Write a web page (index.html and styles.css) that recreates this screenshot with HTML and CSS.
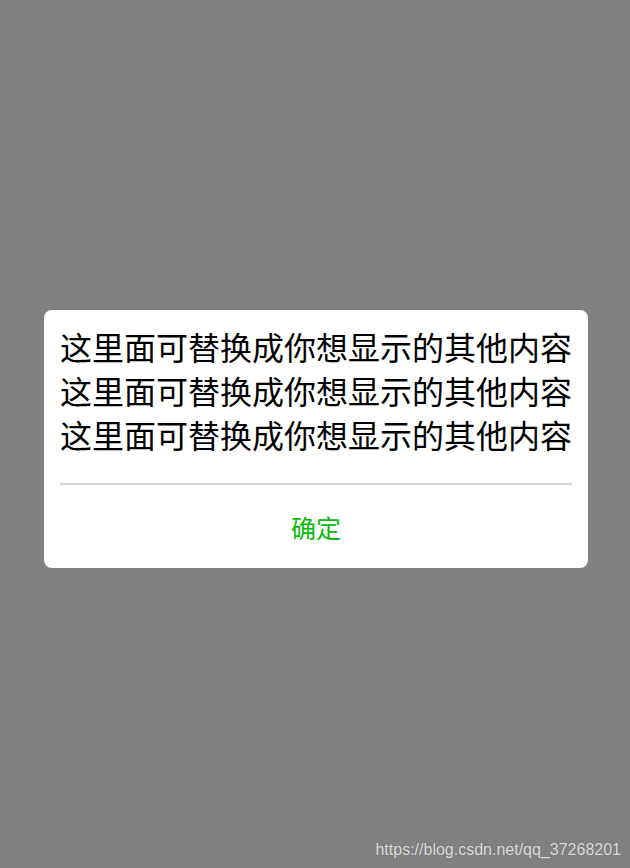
FILE: index.html
```html
<!DOCTYPE html>
<html lang="zh-CN">
<head>
<meta charset="utf-8">
<title>Dialog</title>
<link rel="stylesheet" href="styles.css">
</head>
<body>
<div class="screen">
  <div class="dialog">
    <div class="content">
      <div class="line">这里面可替换成你想显示的其他内容</div>
      <div class="line">这里面可替换成你想显示的其他内容</div>
      <div class="line">这里面可替换成你想显示的其他内容</div>
    </div>
    <div class="divider"></div>
    <div class="actions">
      <span class="confirm">确定</span>
    </div>
  </div>
  <div class="watermark">https://blog.csdn.net/qq_37268201</div>
</div>
</body>
</html>
```
FILE: styles.css
```css
html, body {
  margin: 0;
  padding: 0;
}
body {
  background: #808080;
  font-family: "Noto Sans CJK SC", "Noto Sans", sans-serif;
}
.screen {
  position: relative;
  width: 630px;
  height: 868px;
  box-sizing: border-box;
  padding: 310px 0 0 44px;
  display: flex;
  flex-direction: column;
  align-items: flex-start;
}
.dialog {
  width: 544px;
  height: 258px;
  background: #ffffff;
  border-radius: 8px;
  box-sizing: border-box;
  padding: 14px 16px 0 16px;
  display: flex;
  flex-direction: column;
}
.content {
  text-align: center;
  font-size: 32px;
  line-height: 44px;
  color: #000;
  white-space: nowrap;
}
.divider {
  margin-top: 27px;
  height: 2px;
  background: #d4d4d4;
}
.actions {
  flex: 1;
  display: flex;
  align-items: center;
  justify-content: center;
}
.confirm {
  font-size: 25px;
  line-height: 30px;
  color: #0abb08;
}
.watermark {
  position: absolute;
  right: 9px;
  bottom: 9px;
  font-family: "Liberation Sans", Arial, sans-serif;
  font-size: 16px;
  color: #dcdcdc;
  text-shadow: 0 0 1px rgba(0,0,0,0.25);
}
```
